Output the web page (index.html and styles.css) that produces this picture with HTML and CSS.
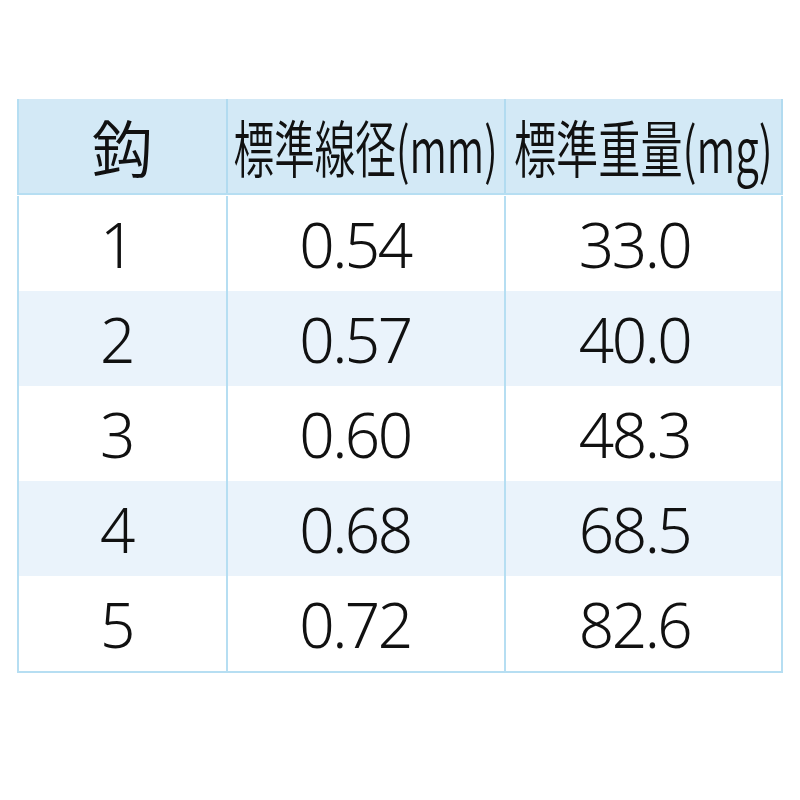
FILE: index.html
```html
<!DOCTYPE html>
<html lang="ja">
<head>
<meta charset="utf-8">
<title>鈎 table</title>
<link rel="stylesheet" href="styles.css">
</head>
<body>
<div class="table">
  <div class="row head">
    <div class="cell c1"><span class="htext">鈎</span></div>
    <div class="cell c2"><span class="htext squeeze s2">標準線径(mm)</span></div>
    <div class="cell c3"><span class="htext squeeze s3">標準重量(mg)</span></div>
  </div>
  <div class="body">
    <div class="row">
      <div class="cell c1"><span class="num">1</span></div>
      <div class="cell c2"><span class="num">0.54</span></div>
      <div class="cell c3"><span class="num">33.0</span></div>
    </div>
    <div class="row alt">
      <div class="cell c1"><span class="num">2</span></div>
      <div class="cell c2"><span class="num">0.57</span></div>
      <div class="cell c3"><span class="num">40.0</span></div>
    </div>
    <div class="row">
      <div class="cell c1"><span class="num">3</span></div>
      <div class="cell c2"><span class="num">0.60</span></div>
      <div class="cell c3"><span class="num">48.3</span></div>
    </div>
    <div class="row alt">
      <div class="cell c1"><span class="num">4</span></div>
      <div class="cell c2"><span class="num">0.68</span></div>
      <div class="cell c3"><span class="num">68.5</span></div>
    </div>
    <div class="row last">
      <div class="cell c1"><span class="num">5</span></div>
      <div class="cell c2"><span class="num">0.72</span></div>
      <div class="cell c3"><span class="num">82.6</span></div>
    </div>
  </div>
</div>
</body>
</html>
```
FILE: styles.css
```css
html, body {
  margin: 0;
  padding: 0;
  background: #ffffff;
}

body {
  font-family: "Noto Sans", "Noto Sans CJK JP", sans-serif;
  color: #141414;
}

.table {
  margin: 99px 0 0 17px;
  width: 766px;
}

.row {
  display: grid;
  grid-template-columns: 209px 278px 277px;
  border-left: 2px solid #b6def2;
  height: 95px;
}

.cell {
  display: flex;
  align-items: center;
  justify-content: center;
  border-right: 2px solid #b6def2;
  overflow: visible;
  white-space: nowrap;
}

.head {
  background: #d3e9f6;
  height: 94px;
  border-bottom: 2px solid #b6def2;
  margin-bottom: 1px;
}

.head .cell {
  border-right-color: #b2dbf0;
}

.htext {
  display: inline-block;
  font-family: "Noto Sans CJK JP", sans-serif;
  font-size: 62px;
  line-height: 1;
  font-weight: 350;
  color: #111111;
}

.squeeze {
  transform-origin: center center;
}

.s2 {
  transform: scaleX(0.655);
}

.s3 {
  transform: scaleX(0.68);
}

.alt {
  background: #eaf3fb;
}

.last {
  height: 95px;
  border-bottom: 2px solid #b6def2;
}

.num {
  font-family: "Noto Sans", "Open Sans", sans-serif;
  font-size: 62px;
  font-weight: 360;
  line-height: 1;
  letter-spacing: -2.5px;
  color: #111111;
}

.body .c1 {
  padding-right: 12px;
}

.body .c2 {
  padding-right: 22px;
}

.body .c3 {
  padding-right: 18px;
}
```
